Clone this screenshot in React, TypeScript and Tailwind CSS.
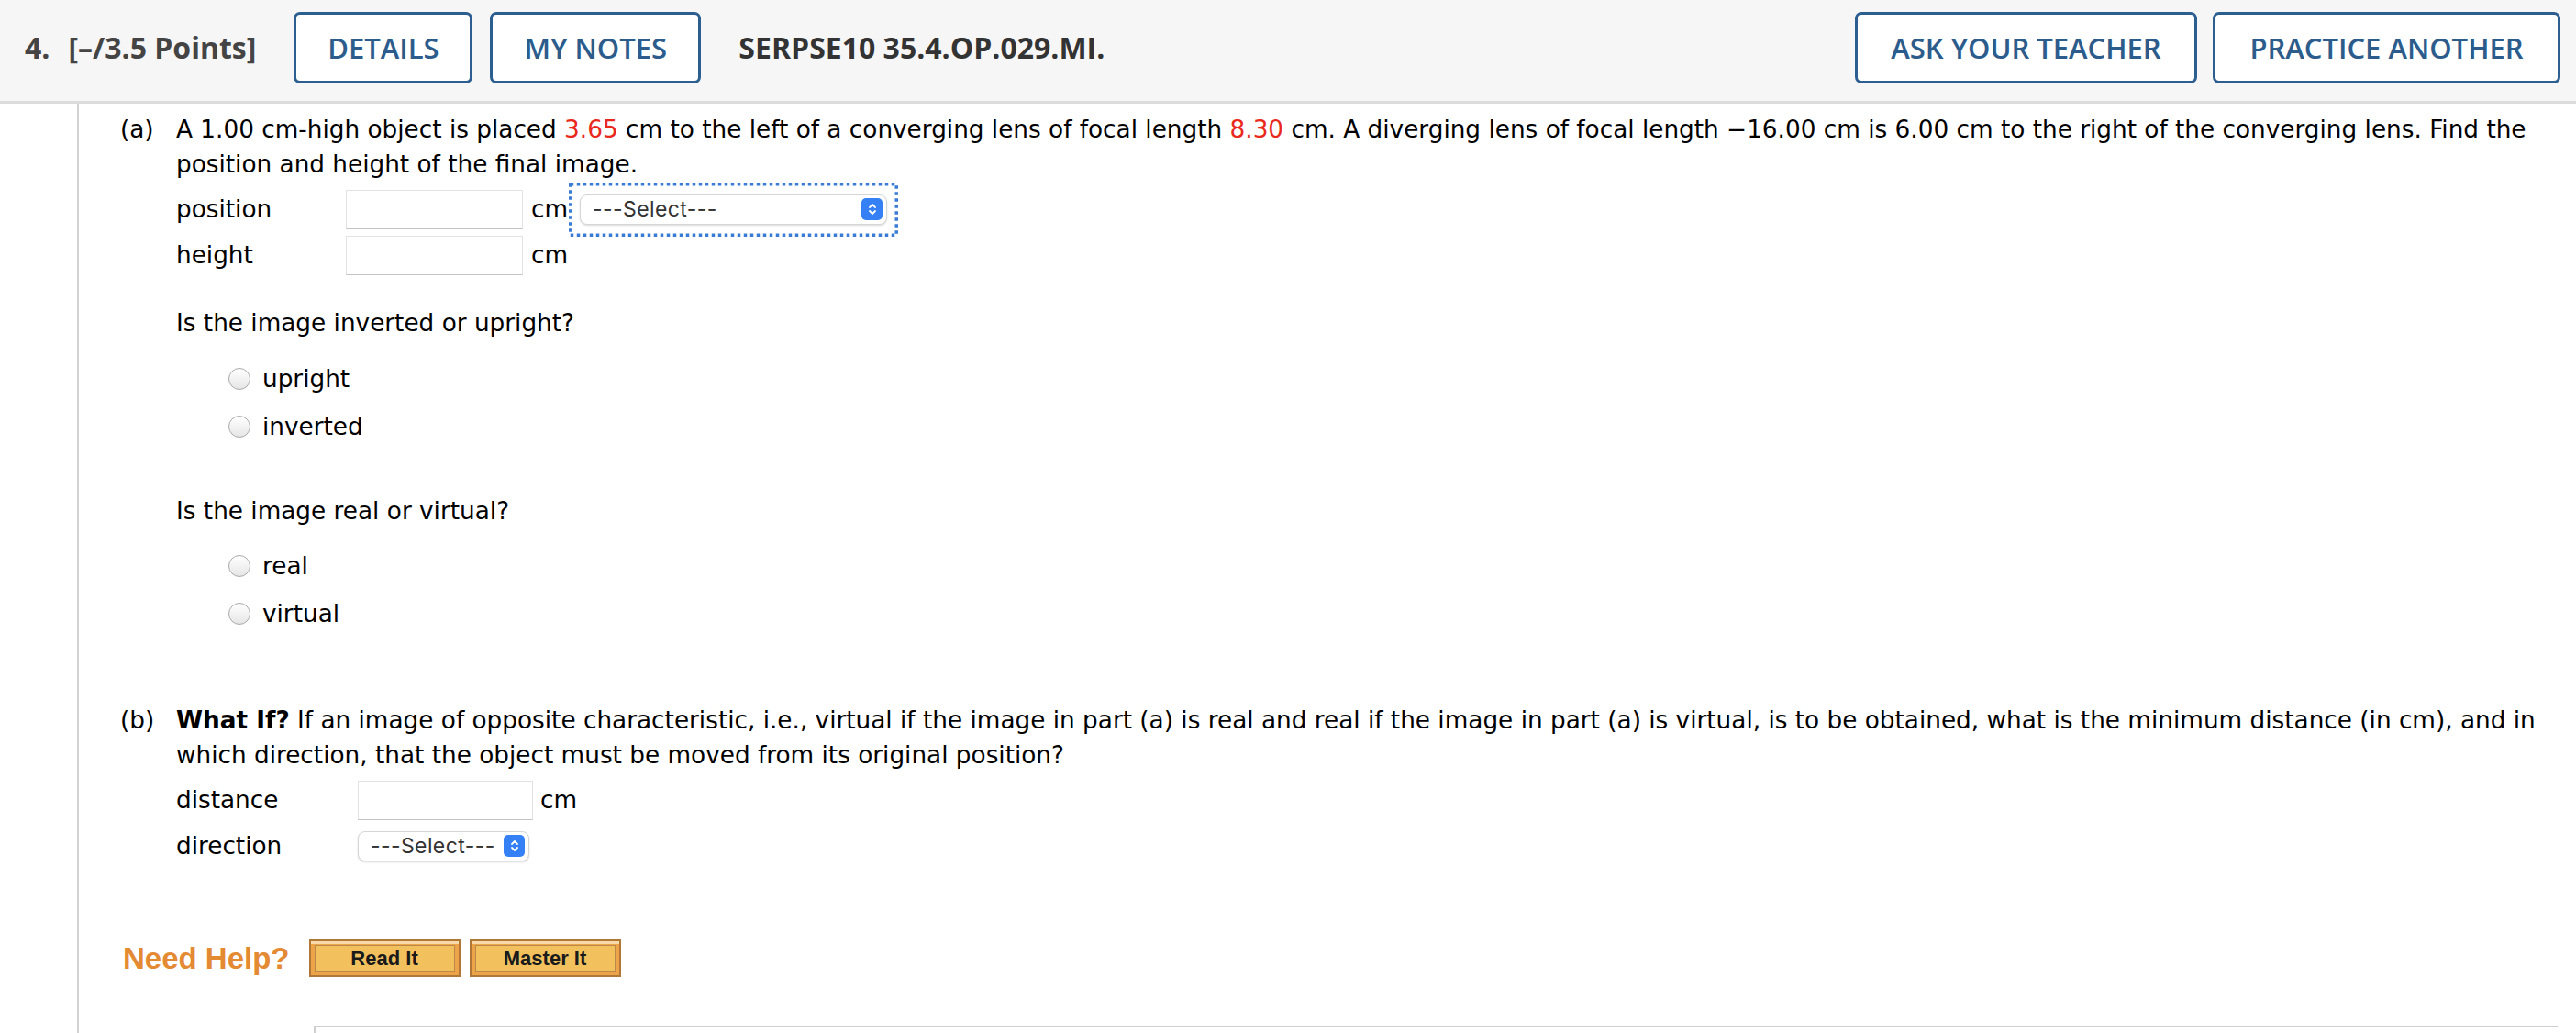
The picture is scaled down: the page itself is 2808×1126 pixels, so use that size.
import React from 'react'

const Stepper = () => (
  <span className="flex h-[24px] w-[23px] shrink-0 items-center justify-center rounded-[5px] bg-[#3580f5]">
    <svg width="12" height="16" viewBox="0 0 12 16" fill="none">
      <path d="M3 6 L6 3 L9 6" stroke="white" strokeWidth="1.8" strokeLinecap="round" strokeLinejoin="round" />
      <path d="M3 10 L6 13 L9 10" stroke="white" strokeWidth="1.8" strokeLinecap="round" strokeLinejoin="round" />
    </svg>
  </span>
)

const SelectBox = ({ width }: { width: string }) => (
  <div
    className={`flex h-[33px] shrink-0 items-center justify-between rounded-[8px] border border-[#d6d6d6] bg-white pl-[13px] pr-[4px] font-['Inter',sans-serif] text-[23px] tracking-[0.4px] text-[#333] shadow-[0_1px_2px_rgba(0,0,0,0.15)] ${width}`}
  >
    <span>---Select---</span>
    <Stepper />
  </div>
)

const TextInput = ({ width }: { width: string }) => (
  <div className={`h-[43px] shrink-0 border border-[#e2e2e2] border-b-[#c4c4c4] bg-white ${width}`} />
)

const Radio = ({ label }: { label: string }) => (
  <div className="flex h-[52px] items-center pl-[57px]">
    <span className="h-[24px] w-[24px] shrink-0 rounded-full border border-[#a9a9a9] bg-gradient-to-b from-white to-[#e6e6e6]" />
    <span className="ml-[13px]">{label}</span>
  </div>
)

const HeadButton = ({ children, w }: { children: React.ReactNode; w: string }) => (
  <div
    className={`flex h-[78px] items-center justify-center rounded-[7px] border-[3px] border-[#2c5f90] bg-white text-[31px] font-semibold text-[#2c5c8c] ${w}`}
  >
    {children}
  </div>
)

const HelpButton = ({ label }: { label: string }) => (
  <div className="h-[41px] w-[165px] border-2 border-[#b07838] bg-[#eda448] p-[4px] shadow-[inset_0_3px_0_#f8d9a8]">
    <div className="flex h-full items-center justify-center border border-[#b98a4a] bg-[#f2c15e] font-['Liberation_Sans',Arial,sans-serif] text-[22px] font-bold text-[#1a1a1a]">
      {label}
    </div>
  </div>
)

export default function App() {
  return (
    <div className="min-h-screen w-full overflow-hidden bg-white font-['DejaVu_Sans',Verdana,sans-serif] text-[26.3px] leading-[38px] text-black">
      <header className="flex h-[113px] items-start border-b-[3px] border-[#dcdcdc] bg-[#f6f6f6] pl-[27px] pr-[17px] pt-[13px] font-['Open_Sans',sans-serif]">
        <div className="flex h-[78px] items-center text-[32px] font-bold text-[#444]">
          <span>4.</span>
          <span className="ml-[20px]">[–/3.5 Points]</span>
        </div>
        <div className="ml-[41px] flex gap-[19px]">
          <HeadButton w="w-[195px]">DETAILS</HeadButton>
          <HeadButton w="w-[230px]">MY NOTES</HeadButton>
        </div>
        <div className="ml-[41px] flex h-[78px] items-center text-[32px] font-bold text-[#333]">
          SERPSE10 35.4.OP.029.MI.
        </div>
        <div className="ml-auto flex gap-[17px]">
          <HeadButton w="w-[373px]">ASK YOUR TEACHER</HeadButton>
          <HeadButton w="w-[379px]">PRACTICE ANOTHER</HeadButton>
        </div>
      </header>

      <main className="ml-[84px] min-h-[1013px] border-l-2 border-[#d2d2d2] pl-[45px] pr-[20px] pt-[9px]">
        {/* part a */}
        <div className="flex">
          <span className="w-[61px] shrink-0">(a)</span>
          <div className="flex-1">
            <p>
              A 1.00 cm-high object is placed <span className="text-[#e8291c]">3.65</span> cm to the left of a
              converging lens of focal length <span className="text-[#e8291c]">8.30</span> cm. A diverging lens of
              focal length −16.00 cm is 6.00 cm to the right of the converging lens. Find the position and height of
              the final image.
            </p>
            <div className="mt-[5px]">
              <div className="flex h-[50px] items-center">
                <span className="w-[185px] shrink-0">position</span>
                <TextInput width="w-[193px]" />
                <span className="ml-[9px]">cm</span>
                <div className="relative ml-[1px] px-[12px] py-[13px]">
                  <svg className="pointer-events-none absolute inset-0 h-full w-full" preserveAspectRatio="none">
                    <rect
                      x="1.75"
                      y="1.75"
                      width="calc(100% - 3.5px)"
                      height="calc(100% - 3.5px)"
                      fill="none"
                      stroke="#3a7bd5"
                      strokeWidth="3.5"
                      strokeDasharray="3.5 3.5"
                    />
                  </svg>
                  <SelectBox width="w-[335px]" />
                </div>
              </div>
              <div className="flex h-[50px] items-center">
                <span className="w-[185px] shrink-0">height</span>
                <TextInput width="w-[193px]" />
                <span className="ml-[9px]">cm</span>
              </div>
            </div>

            <p className="mt-[30px]">Is the image inverted or upright?</p>
            <div className="mt-[16px]">
              <Radio label="upright" />
              <Radio label="inverted" />
            </div>

            <p className="mt-[47px]">Is the image real or virtual?</p>
            <div className="mt-[15px]">
              <Radio label="real" />
              <Radio label="virtual" />
            </div>
          </div>
        </div>

        {/* part b */}
        <div className="mt-[71px] flex">
          <span className="w-[61px] shrink-0">(b)</span>
          <div className="flex-1">
            <p>
              <b>What If?</b> If an image of opposite characteristic, i.e., virtual if the image in part (a) is real
              and real if the image in part (a) is virtual, is to be obtained, what is the minimum distance (in cm),
              and in which direction, that the object must be moved from its original position?
            </p>
            <div className="mt-[5px]">
              <div className="flex h-[50px] items-center">
                <span className="w-[198px] shrink-0">distance</span>
                <TextInput width="w-[191px]" />
                <span className="ml-[8px]">cm</span>
              </div>
              <div className="flex h-[50px] items-center">
                <span className="w-[198px] shrink-0">direction</span>
                <SelectBox width="w-[187px]" />
              </div>
            </div>
          </div>
        </div>

        <div className="mt-[77px] flex items-center">
          <span className="ml-[3px] font-['Liberation_Sans',Arial,sans-serif] text-[33px] font-bold text-[#e38a33]">
            Need Help?
          </span>
          <div className="ml-[21px] flex gap-[10px]">
            <HelpButton label="Read It" />
            <HelpButton label="Master It" />
          </div>
        </div>

        <div className="ml-[211px] mt-[53px] h-[60px] border-l-2 border-t-2 border-[#cfcfcf]" />
      </main>
    </div>
  )
}
